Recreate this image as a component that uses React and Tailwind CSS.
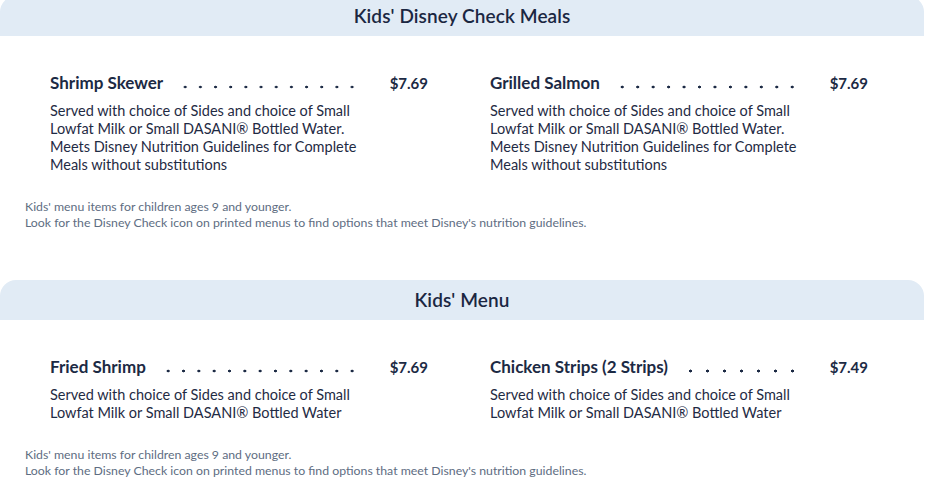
import React from "react";

const sections = [
  {
    title: "Kids' Disney Check Meals",
    items: [
      {
        name: "Shrimp Skewer",
        price: "$7.69",
        lines: [
          "Served with choice of Sides and choice of Small",
          "Lowfat Milk or Small DASANI® Bottled Water.",
          "Meets Disney Nutrition Guidelines for Complete",
          "Meals without substitutions",
        ],
      },
      {
        name: "Grilled Salmon",
        price: "$7.69",
        lines: [
          "Served with choice of Sides and choice of Small",
          "Lowfat Milk or Small DASANI® Bottled Water.",
          "Meets Disney Nutrition Guidelines for Complete",
          "Meals without substitutions",
        ],
      },
    ],
  },
  {
    title: "Kids' Menu",
    items: [
      {
        name: "Fried Shrimp",
        price: "$7.69",
        lines: [
          "Served with choice of Sides and choice of Small",
          "Lowfat Milk or Small DASANI® Bottled Water",
        ],
      },
      {
        name: "Chicken Strips (2 Strips)",
        price: "$7.49",
        lines: [
          "Served with choice of Sides and choice of Small",
          "Lowfat Milk or Small DASANI® Bottled Water",
        ],
      },
    ],
  },
];

const MenuItem = ({ item }) => (
  <div>
    {/* name . . . . price */}
    <div className="flex items-center h-[22px]">
      <span className="text-[17px] font-bold whitespace-nowrap">{item.name}</span>
      {/* dot leader */}
      <div className="flex-1 self-end mb-[5px] ml-[15px] mr-[30px] h-[4px] bg-[radial-gradient(circle,#1c2a44_1.4px,transparent_1.6px)] bg-[length:15px_4px] bg-repeat-space" />
      <span className="text-[15px] font-bold pr-[12px]">{item.price}</span>
    </div>
    <p className="mt-[8px] text-[14.5px] leading-[18px] text-[#1f2b44]">
      {item.lines.map((l) => (
        <span key={l} className="block whitespace-nowrap">
          {l}
        </span>
      ))}
    </p>
  </div>
);

const Section = ({ section, first }) => (
  <section className={first ? "-mt-1" : "mt-[49px]"}>
    <div className="h-10 rounded-t-2xl bg-[#e1ebf5] flex items-center justify-center">
      <h2 className="text-[19px] font-semibold text-[#1b2742] tracking-[0.1px]">
        {section.title}
      </h2>
    </div>
    <div className="grid grid-cols-2 gap-x-[50px] pl-[50px] pr-[44px] pt-[36px]">
      {section.items.map((item) => (
        <MenuItem key={item.name} item={item} />
      ))}
    </div>
    <div className="pl-[25px] mt-[25px] text-[12.3px] leading-[16px] text-[#5e6d82]">
      <p>Kids' menu items for children ages 9 and younger.</p>
      <p>
        Look for the Disney Check icon on printed menus to find options that meet Disney's
        nutrition guidelines.
      </p>
    </div>
  </section>
);

export default function App() {
  return (
    <div className="w-[926px] h-[501px] overflow-hidden bg-white">
      <div className="w-[924px] font-['Lato','Noto_Sans',sans-serif] text-[#1c2a44]">
        {sections.map((s, i) => (
          <Section key={s.title} section={s} first={i === 0} />
        ))}
      </div>
    </div>
  );
}
